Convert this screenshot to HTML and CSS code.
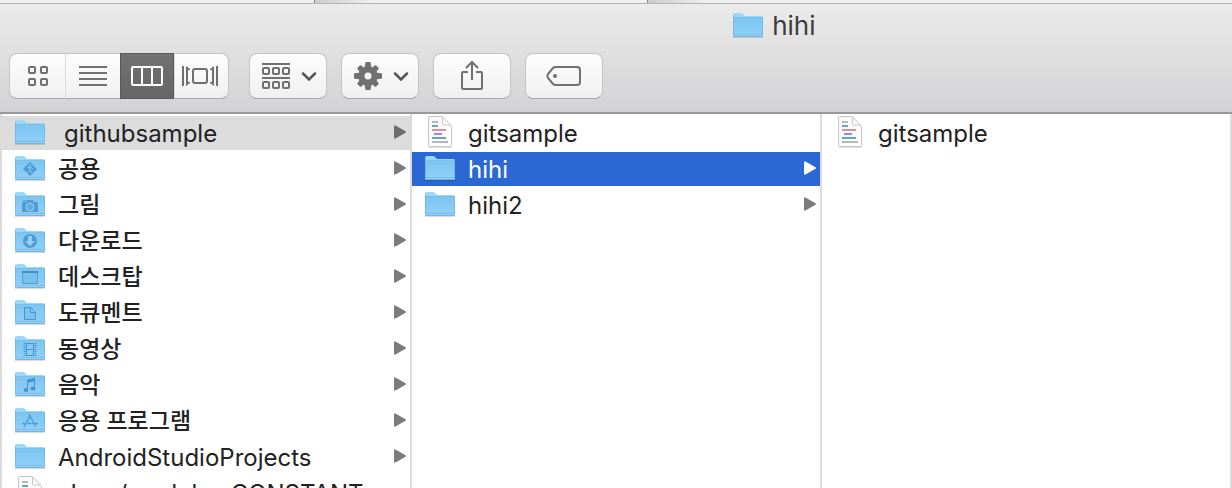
FILE: index.html
```html
<!DOCTYPE html>
<html lang="ko">
<head>
<meta charset="utf-8">
<title>hihi</title>
<link rel="stylesheet" href="styles.css">
</head>
<body>
<svg class="defs" aria-hidden="true">
  <defs>
    <linearGradient id="blue" x1="0" y1="0" x2="0" y2="1"><stop offset="0" stop-color="#7cc6f2"/><stop offset="1" stop-color="#90d0f8"/></linearGradient>
    <linearGradient id="paper" x1="0" y1="0" x2="1" y2="1"><stop offset="0" stop-color="#f7f7f7"/><stop offset="1" stop-color="#fff"/></linearGradient>
    <symbol id="folder" viewBox="0 0 32 28">
      <path d="M1 24h30v2H1z" fill="#000" opacity=".14"/>
      <path d="M1 3q0-2 2-2h6q1 0 2 1l2 2h16q2 0 2 2v17q0 1-1 1H2q-1 0-1-1z" fill="#9ad8f9"/>
      <path d="M1 6h30v17q0 1-1 1H2q-1 0-1-1z" fill="url(#blue)"/>
      <path d="M1 5.5h30M1.5 3v20M30.5 6v17" stroke="#68b0dc" stroke-width="1" opacity=".6"/>
      <path d="M2 22.5h28" stroke="#70b9e4" opacity=".6"/>
      <path d="M1 24.5h30" stroke="#7ab4d6"/>
    </symbol>
    <symbol id="file" viewBox="1 1 32 36">
      <path d="M6 4h14l9 9v21H6z" fill="#000" opacity=".12"/>
      <path d="M5.5 3.500q0-1 1-1H19l9.500 10v19q0 1-1 1h-21q-1 0-1-1z" fill="url(#paper)" stroke="#c6c6c6"/>
      <path d="M19.500 3v7q0 1 1 1h7z" fill="#fff" stroke="#c8c8c8"/>
      <path d="M9 8h6M9 28h16" stroke="#b8b8b8" stroke-width="2"/>
      <path d="M9 12h6M9 24h14" stroke="#62a7b4" stroke-width="2"/>
      <path d="M9 16h14" stroke="#d19497" stroke-width="2"/>
      <path d="M11 20h8" stroke="#a77cf5" stroke-width="2"/>
    </symbol>
    <symbol id="arrow" viewBox="0 0 12 16"><path d="M0 1.500Q0 0 1.500.5L11.500 6.200q1 .8 0 1.600L1.500 13.500Q0 14 0 12.500z" fill="currentColor"/></symbol>
    <symbol id="chevron" viewBox="0 0 16 12"><path d="M2 3.500l6 6 6-6" fill="none" stroke="#555" stroke-width="2.500" stroke-linecap="round"/></symbol>
  </defs>
</svg>

<main class="finder">
  <div class="tabs"><span></span><span></span><span></span></div>
  <header class="header">
    <h1 class="title"><svg class="icon"><use href="#folder"/></svg>hihi</h1>
    <div class="toolbar">
      <div class="segments">
        <button class="tool" aria-label="Icons"><svg width="22" height="22" fill="none" stroke="#707070" stroke-width="2"><rect x="2" y="2" width="6" height="6" rx="1"/><rect x="14" y="2" width="6" height="6" rx="1"/><rect x="2" y="14" width="6" height="6" rx="1"/><rect x="14" y="14" width="6" height="6" rx="1"/></svg></button>
        <button class="tool" aria-label="List"><svg width="28" height="20" stroke="#707070" stroke-width="2"><path d="M0 1h28M0 7h28M0 13h28M0 19h28"/></svg></button>
        <button class="tool active" aria-label="Columns" aria-pressed="true"><svg width="32" height="20" fill="none" stroke="#fff" stroke-width="2"><rect x="1" y="1" width="30" height="18" rx="1"/><path d="M11 1v18M21 1v18" /></svg></button>
        <button class="tool" aria-label="Cover Flow"><svg width="36" height="20" fill="none" stroke="#707070" stroke-width="2"><path d="M1 0v20M35 0v20"/><path d="M4 0l4 3v1H6v12h2v1l-4 3zM32 0l-4 3v1h2v12h-2v1l4 3z" fill="#707070" stroke="none"/><rect x="11" y="3" width="14" height="14" rx="2"/></svg></button>
      </div>
      <button class="tool single menu" aria-label="Arrange"><svg width="28" height="26" fill="none" stroke="#707070" stroke-width="2"><path d="M0 1h28M0 15h28"/><rect x="1" y="5" width="6" height="6" rx="1"/><rect x="11" y="5" width="6" height="6" rx="1"/><rect x="21" y="5" width="6" height="6" rx="1"/><rect x="1" y="19" width="6" height="6" rx="1"/><rect x="11" y="19" width="6" height="6" rx="1"/><rect x="21" y="19" width="6" height="6" rx="1"/></svg><svg class="chevron"><use href="#chevron"/></svg></button>
      <button class="tool single menu" aria-label="Action"><svg width="28" height="28" viewBox="-14 -14 28 28"><g fill="#707070"><path id="teeth" d="M-2.500-14h5l1 6h-7zM-2.500 14h5l1-6h-7zM-14-2.500v5l6 1v-7zM14-2.500v5l-6 1v-7z"/><use href="#teeth" transform="rotate(45) scale(.94)"/></g><circle r="6.500" fill="none" stroke="#707070" stroke-width="6"/></svg><svg class="chevron"><use href="#chevron"/></svg></button>
      <button class="tool single" aria-label="Share"><svg width="24" height="32" fill="none" stroke="#707070" stroke-width="2"><path d="M8 12H3q-1 0-1 1v15q0 1 1 1h18q1 0 1-1V13q0-1-1-1h-5M12 20V2M6 8l6-6 6 6"/></svg></button>
      <button class="tool single" aria-label="Tags"><svg width="36" height="22" fill="none" stroke="#707070" stroke-width="2"><path d="M10 2h21q3 0 3 3v12q0 3-3 3H10q-2 0-3-1l-5-6q-1-2 0-4l5-6q1-1 3-1z"/><circle cx="9" cy="11" r="2" fill="#707070" stroke="none"/></svg></button>
    </div>
  </header>

  <div class="columns">
    <ul class="column">
      <li><a class="row open" href="#"><svg class="icon"><use href="#folder"/></svg><span class="name inset">githubsample</span><svg class="arrow"><use href="#arrow"/></svg></a></li>
      <li><a class="row" href="#"><svg class="icon" viewBox="0 0 32 28"><use href="#folder"/><path d="M16 7l7 7-7 7-7-7z" fill="#4f9dd0"/><circle cx="16" cy="10.500" r="1" fill="#8acdf5"/><path d="M13 13l3-1 3 2M16 12v3l-3 3M16 15l2 3" fill="none" stroke="#8acdf5"/></svg><span class="name hangul">공용</span><svg class="arrow"><use href="#arrow"/></svg></a></li>
      <li><a class="row" href="#"><svg class="icon" viewBox="0 0 32 28"><use href="#folder"/><path d="M8 11h4l1-2h6l1 2h4v10H8zM9 9h3v1H9z" fill="#4f9dd0"/><circle cx="16" cy="16" r="4" fill="#62add9" stroke="#8fd0f5"/></svg><span class="name hangul">그림</span><svg class="arrow"><use href="#arrow"/></svg></a></li>
      <li><a class="row" href="#"><svg class="icon" viewBox="0 0 32 28"><use href="#folder"/><circle cx="16" cy="14" r="7" fill="#4f9dd0"/><path d="M14 9h4v5h3l-5 5-5-5h3z" fill="#8fd0f7"/></svg><span class="name hangul">다운로드</span><svg class="arrow"><use href="#arrow"/></svg></a></li>
      <li><a class="row" href="#"><svg class="icon" viewBox="0 0 32 28"><use href="#folder"/><path d="M8.500 8.500h15v12h-15z" fill="#78bfe9" stroke="#4f9dd0"/><path d="M8 9h16" stroke="#438fc4" stroke-width="2"/></svg><span class="name hangul">데스크탑</span><svg class="arrow"><use href="#arrow"/></svg></a></li>
      <li><a class="row" href="#"><svg class="icon" viewBox="0 0 32 28"><use href="#folder"/><path d="M10.500 8.500h6l5 5v7h-11zM16.500 8.500v5h5" fill="#7ac1ec" stroke="#4795c9"/></svg><span class="name hangul">도큐멘트</span><svg class="arrow"><use href="#arrow"/></svg></a></li>
      <li><a class="row" href="#"><svg class="icon" viewBox="0 0 32 28"><use href="#folder"/><path d="M12.500 8v13M19.500 8v13M12 8.500h8M12 14.500h8M12 20.500h8" fill="none" stroke="#4795c9"/><path d="M10.500 8v13M21.500 8v13" stroke="#4795c9" stroke-width="2" stroke-dasharray="1 1"/></svg><span class="name hangul">동영상</span><svg class="arrow"><use href="#arrow"/></svg></a></li>
      <li><a class="row" href="#"><svg class="icon" viewBox="0 0 32 28"><use href="#folder"/><path d="M13.500 19V9l7-1.500v10" fill="none" stroke="#4795c9"/><path d="M13 9l8-2v3l-8 2z" fill="#4795c9"/><ellipse cx="12" cy="19" rx="2.500" ry="2" fill="#4795c9"/><ellipse cx="19" cy="17.500" rx="2.500" ry="2" fill="#4795c9"/></svg><span class="name hangul">음악</span><svg class="arrow"><use href="#arrow"/></svg></a></li>
      <li><a class="row" href="#"><svg class="icon" viewBox="0 0 32 28"><use href="#folder"/><path d="M10 20l6-11M15 7l7 13M8 16.500h3M13 16.500h6M21 16.500h3" fill="none" stroke="#4f9dd0" stroke-width="1.500" stroke-dasharray="4 .5"/></svg><span class="name hangul">응용 프로그램</span><svg class="arrow"><use href="#arrow"/></svg></a></li>
      <li><a class="row" href="#"><svg class="icon"><use href="#folder"/></svg><span class="name">AndroidStudioProjects</span><svg class="arrow"><use href="#arrow"/></svg></a></li>
      <li><a class="row" href="#"><svg class="icon file"><use href="#file"/></svg><span class="name">show/modules CONSTANT</span></a></li>
    </ul>
    <ul class="column">
      <li><a class="row" href="#"><svg class="icon file"><use href="#file"/></svg><span class="name">gitsample</span></a></li>
      <li><a class="row selected" href="#"><svg class="icon"><use href="#folder"/></svg><span class="name">hihi</span><svg class="arrow"><use href="#arrow"/></svg></a></li>
      <li><a class="row" href="#"><svg class="icon"><use href="#folder"/></svg><span class="name">hihi2</span><svg class="arrow"><use href="#arrow"/></svg></a></li>
    </ul>
    <ul class="column">
      <li><a class="row" href="#"><svg class="icon file"><use href="#file"/></svg><span class="name">gitsample</span></a></li>
    </ul>
  </div>
</main>
</body>
</html>
```

FILE: styles.css
```css
* { box-sizing: border-box; }
body {
  margin: 0;
  color: #222;
  font-family: Inter, "Noto Sans CJK KR", sans-serif;
  font-size: 24px;
  line-height: 34px;
}
svg { flex: none; display: block; }
.defs { position: absolute; width: 0; height: 0; }
.finder {
  display: flex;
  flex-direction: column;
  height: 100vh;
  overflow: hidden;
  background: #fff;
}
.tabs {
  display: grid;
  grid-template-columns: 315fr 333fr 584fr;
  flex: none;
  height: 4px;
  border-bottom: 1px solid #b5b5b5;
}
.tabs span { background: #f0f0f0; border-right: 1px solid #888; }
.tabs span + span { background: linear-gradient(90deg, #ccc, #f0f0f0 60px); }
.tabs span:last-child { border-right: 0; }
.header {
  flex: none;
  padding: 5px 9px 13px;
  background: linear-gradient(#ebebeb, #d3d2d4);
  border-bottom: 2px solid #989898;
}
.title {
  display: flex;
  align-items: center;
  justify-content: center;
  gap: 8px;
  margin: 0 0 10px;
  padding-left: 26%;
  color: #3c3c3c;
  font-size: 26px;
  font-weight: 400;
  line-height: 34px;
}
.toolbar { display: flex; gap: 14px; }
.segments { display: flex; margin-right: 6px; }
.tool {
  display: flex;
  align-items: center;
  justify-content: center;
  gap: 11px;
  width: 55px;
  height: 46px;
  padding: 0;
  border: 1px solid #c4c4c4;
  border-bottom-color: #a8a8a8;
  background: linear-gradient(#fdfdfd, #f0f0f0);
}
.segments .tool + .tool { border-left-color: #dcdcdc; }
.segments .tool:not(:last-child) { border-right: 0; }
.segments .tool:first-child { width: 56px; border-radius: 8px 0 0 8px; }
.segments .tool:last-child { padding-right: 3px; border-radius: 0 8px 8px 0; }
.segments .tool.active {
  width: 54px;
  border: 1px solid #595959;
  background: linear-gradient(#727272, #666);
}
.tool.single { width: 78px; border-radius: 8px; }
.tool.menu { padding-left: 2px; }
.chevron { width: 16px; height: 12px; }
.columns {
  display: grid;
  grid-template-columns: repeat(3, 1fr);
  flex: 1;
  min-height: 0;
  border-left: 2px solid #dcdcdc;
}
.column {
  display: flex;
  flex-direction: column;
  gap: 2px;
  min-width: 0;
  margin: 0;
  padding: 2px 0 0;
  border-right: 2px solid #dcdcdc;
  list-style: none;
}
.row {
  display: flex;
  align-items: center;
  height: 34px;
  padding: 0 4px 0 12px;
  color: inherit;
  text-decoration: none;
}
.icon { width: 32px; height: 28px; }
.icon.file { height: 36px; }
.name { flex: 1; padding: 2px 0 0 12px; white-space: nowrap; }
.hangul { padding-top: 0; font-size: 23px; font-weight: 500; }
.inset { padding-left: 18px; }
.arrow { width: 12px; height: 16px; color: #7c7c7c; }
.open { background: #dcdcdc; }
.open .arrow { color: #6c6c6c; }
.selected, .selected .arrow { color: #fff; }
.selected { background: #2b68d3; }
```
